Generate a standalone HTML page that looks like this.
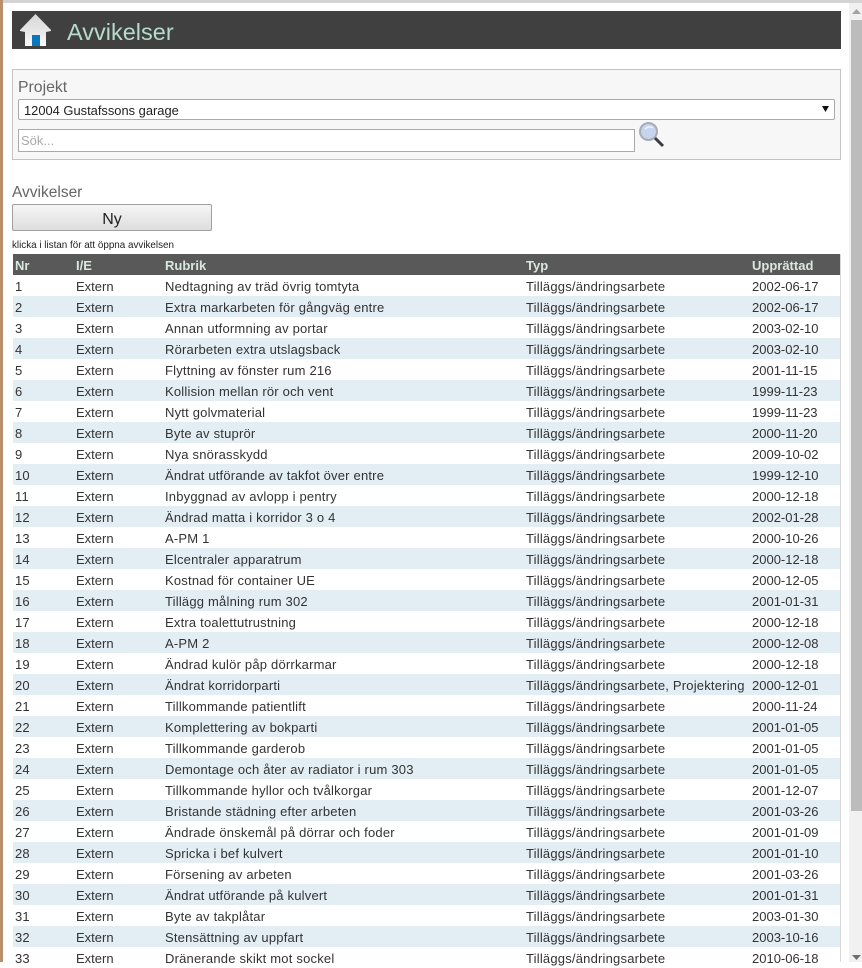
<!DOCTYPE html>
<html><head><meta charset="utf-8">
<style>
html,body{margin:0;padding:0;width:862px;height:962px;overflow:hidden;background:#fff;font-family:"Liberation Sans",sans-serif;color:#333}
div{position:absolute;white-space:nowrap;box-sizing:border-box}
.r{left:13px;width:828px;height:21px;font-size:13px;letter-spacing:.2px;line-height:21px;color:#333;overflow:hidden}
.r span{position:absolute;top:1px}
.b{background:#e3edf4}
.a{left:2px}.c{left:63px;letter-spacing:0}.d{left:152px}.e{left:513px}.f{left:739px;letter-spacing:0}
.h{background:#595959;color:#d9e8dc;font-weight:bold;letter-spacing:0}
</style></head><body>
<div style="left:0;top:0;width:862px;height:3px;background:#d4d4d4"></div>
<div style="left:0;top:0;width:3px;height:962px;background:#b98f6c"></div>
<div style="left:12px;top:11px;width:829px;height:38px;background:#404040"></div>
<svg style="position:absolute;left:19px;top:12px" width="34" height="36" viewBox="0 0 34 36">
<defs><linearGradient id="g" x1="0" y1="0" x2="0" y2="1"><stop offset="0" stop-color="#d8d8d8"/><stop offset=".45" stop-color="#e4e4e4"/><stop offset="1" stop-color="#fafafa"/></linearGradient></defs>
<path d="M16.500 2 L32 18 L32 19 L27 20 L27 34 L6 34 L6 20 L1 19 L1 18 Z" fill="url(#g)"/>
<rect x="13" y="23" width="8" height="11" fill="#0b76bd"/></svg>
<div style="left:67px;top:16px;font-size:23.500px;line-height:32px;color:#b5dccb">Avvikelser</div>
<div style="left:12px;top:69px;width:829px;height:91px;background:#f7f7f7;border:1px solid #c4c4c4"></div>
<div style="left:18px;top:78px;font-size:15.800px;line-height:20px;color:#666">Projekt</div>
<div style="left:18px;top:99px;width:817px;height:21px;background:#fff;border:1px solid #aaa;border-radius:2px;font-size:12.900px;line-height:21px;color:#222;padding-left:5px">12004 Gustafssons garage</div>
<svg style="position:absolute;left:821px;top:105px" width="9" height="8"><path d="M1 1H8L4.500 7Z" fill="#111"/></svg>
<div style="left:18px;top:129px;width:617px;height:23px;background:#fff;border:1px solid #aaa;font-size:13px;line-height:22px;color:#aaa;padding-left:2px">Sök...</div>
<svg style="position:absolute;left:638px;top:121px" width="27" height="27" viewBox="0 0 27 27">
<circle cx="10.500" cy="10.500" r="8.500" fill="#c6d4ee" stroke="#a8acb4" stroke-width="2"/>
<path d="M15 7a6 6 0 0 0-8 1" stroke="#eef2fa" stroke-width="1.500" fill="none"/>
<path d="M17 17L25 25" stroke="#3c3c3c" stroke-width="3"/></svg>
<div style="left:12px;top:183px;font-size:15.500px;line-height:20px;color:#666">Avvikelser</div>
<div style="left:12px;top:204px;width:200px;height:27px;background:linear-gradient(#f5f5f5,#dedede);border:1px solid #a0a0a0;border-radius:2px;text-align:center;font-size:16px;line-height:29px;color:#222;overflow:hidden">Ny</div>
<div style="left:12px;top:239px;font-size:9.850px;line-height:13px;color:#222">klicka i listan för att öppna avvikelsen</div>
<div class="r h" style="top:254px"><span class="a">Nr</span><span class="c">I/E</span><span class="d">Rubrik</span><span class="e">Typ</span><span class="f">Upprättad</span></div>
<div class="r" style="top:275px"><span class="a">1</span><span class="c">Extern</span><span class="d">Nedtagning av träd övrig tomtyta</span><span class="e">Tilläggs/ändringsarbete</span><span class="f">2002-06-17</span></div>
<div class="r b" style="top:296px"><span class="a">2</span><span class="c">Extern</span><span class="d">Extra markarbeten för gångväg entre</span><span class="e">Tilläggs/ändringsarbete</span><span class="f">2002-06-17</span></div>
<div class="r" style="top:317px"><span class="a">3</span><span class="c">Extern</span><span class="d">Annan utformning av portar</span><span class="e">Tilläggs/ändringsarbete</span><span class="f">2003-02-10</span></div>
<div class="r b" style="top:338px"><span class="a">4</span><span class="c">Extern</span><span class="d">Rörarbeten extra utslagsback</span><span class="e">Tilläggs/ändringsarbete</span><span class="f">2003-02-10</span></div>
<div class="r" style="top:359px"><span class="a">5</span><span class="c">Extern</span><span class="d">Flyttning av fönster rum 216</span><span class="e">Tilläggs/ändringsarbete</span><span class="f">2001-11-15</span></div>
<div class="r b" style="top:380px"><span class="a">6</span><span class="c">Extern</span><span class="d">Kollision mellan rör och vent</span><span class="e">Tilläggs/ändringsarbete</span><span class="f">1999-11-23</span></div>
<div class="r" style="top:401px"><span class="a">7</span><span class="c">Extern</span><span class="d">Nytt golvmaterial</span><span class="e">Tilläggs/ändringsarbete</span><span class="f">1999-11-23</span></div>
<div class="r b" style="top:422px"><span class="a">8</span><span class="c">Extern</span><span class="d">Byte av stuprör</span><span class="e">Tilläggs/ändringsarbete</span><span class="f">2000-11-20</span></div>
<div class="r" style="top:443px"><span class="a">9</span><span class="c">Extern</span><span class="d">Nya snörasskydd</span><span class="e">Tilläggs/ändringsarbete</span><span class="f">2009-10-02</span></div>
<div class="r b" style="top:464px"><span class="a">10</span><span class="c">Extern</span><span class="d">Ändrat utförande av takfot över entre</span><span class="e">Tilläggs/ändringsarbete</span><span class="f">1999-12-10</span></div>
<div class="r" style="top:485px"><span class="a">11</span><span class="c">Extern</span><span class="d">Inbyggnad av avlopp i pentry</span><span class="e">Tilläggs/ändringsarbete</span><span class="f">2000-12-18</span></div>
<div class="r b" style="top:506px"><span class="a">12</span><span class="c">Extern</span><span class="d">Ändrad matta i korridor 3 o 4</span><span class="e">Tilläggs/ändringsarbete</span><span class="f">2002-01-28</span></div>
<div class="r" style="top:527px"><span class="a">13</span><span class="c">Extern</span><span class="d">A-PM 1</span><span class="e">Tilläggs/ändringsarbete</span><span class="f">2000-10-26</span></div>
<div class="r b" style="top:548px"><span class="a">14</span><span class="c">Extern</span><span class="d">Elcentraler apparatrum</span><span class="e">Tilläggs/ändringsarbete</span><span class="f">2000-12-18</span></div>
<div class="r" style="top:569px"><span class="a">15</span><span class="c">Extern</span><span class="d">Kostnad för container UE</span><span class="e">Tilläggs/ändringsarbete</span><span class="f">2000-12-05</span></div>
<div class="r b" style="top:590px"><span class="a">16</span><span class="c">Extern</span><span class="d">Tillägg målning rum 302</span><span class="e">Tilläggs/ändringsarbete</span><span class="f">2001-01-31</span></div>
<div class="r" style="top:611px"><span class="a">17</span><span class="c">Extern</span><span class="d">Extra toalettutrustning</span><span class="e">Tilläggs/ändringsarbete</span><span class="f">2000-12-18</span></div>
<div class="r b" style="top:632px"><span class="a">18</span><span class="c">Extern</span><span class="d">A-PM 2</span><span class="e">Tilläggs/ändringsarbete</span><span class="f">2000-12-08</span></div>
<div class="r" style="top:653px"><span class="a">19</span><span class="c">Extern</span><span class="d">Ändrad kulör påp dörrkarmar</span><span class="e">Tilläggs/ändringsarbete</span><span class="f">2000-12-18</span></div>
<div class="r b" style="top:674px"><span class="a">20</span><span class="c">Extern</span><span class="d">Ändrat korridorparti</span><span class="e">Tilläggs/ändringsarbete, Projektering</span><span class="f">2000-12-01</span></div>
<div class="r" style="top:695px"><span class="a">21</span><span class="c">Extern</span><span class="d">Tillkommande patientlift</span><span class="e">Tilläggs/ändringsarbete</span><span class="f">2000-11-24</span></div>
<div class="r b" style="top:716px"><span class="a">22</span><span class="c">Extern</span><span class="d">Komplettering av bokparti</span><span class="e">Tilläggs/ändringsarbete</span><span class="f">2001-01-05</span></div>
<div class="r" style="top:737px"><span class="a">23</span><span class="c">Extern</span><span class="d">Tillkommande garderob</span><span class="e">Tilläggs/ändringsarbete</span><span class="f">2001-01-05</span></div>
<div class="r b" style="top:758px"><span class="a">24</span><span class="c">Extern</span><span class="d">Demontage och åter av radiator i rum 303</span><span class="e">Tilläggs/ändringsarbete</span><span class="f">2001-01-05</span></div>
<div class="r" style="top:779px"><span class="a">25</span><span class="c">Extern</span><span class="d">Tillkommande hyllor och tvålkorgar</span><span class="e">Tilläggs/ändringsarbete</span><span class="f">2001-12-07</span></div>
<div class="r b" style="top:800px"><span class="a">26</span><span class="c">Extern</span><span class="d">Bristande städning efter arbeten</span><span class="e">Tilläggs/ändringsarbete</span><span class="f">2001-03-26</span></div>
<div class="r" style="top:821px"><span class="a">27</span><span class="c">Extern</span><span class="d">Ändrade önskemål på dörrar och foder</span><span class="e">Tilläggs/ändringsarbete</span><span class="f">2001-01-09</span></div>
<div class="r b" style="top:842px"><span class="a">28</span><span class="c">Extern</span><span class="d">Spricka i bef kulvert</span><span class="e">Tilläggs/ändringsarbete</span><span class="f">2001-01-10</span></div>
<div class="r" style="top:863px"><span class="a">29</span><span class="c">Extern</span><span class="d">Försening av arbeten</span><span class="e">Tilläggs/ändringsarbete</span><span class="f">2001-03-26</span></div>
<div class="r b" style="top:884px"><span class="a">30</span><span class="c">Extern</span><span class="d">Ändrat utförande på kulvert</span><span class="e">Tilläggs/ändringsarbete</span><span class="f">2001-01-31</span></div>
<div class="r" style="top:905px"><span class="a">31</span><span class="c">Extern</span><span class="d">Byte av takplåtar</span><span class="e">Tilläggs/ändringsarbete</span><span class="f">2003-01-30</span></div>
<div class="r b" style="top:926px"><span class="a">32</span><span class="c">Extern</span><span class="d">Stensättning av uppfart</span><span class="e">Tilläggs/ändringsarbete</span><span class="f">2003-10-16</span></div>
<div class="r" style="top:947px"><span class="a">33</span><span class="c">Extern</span><span class="d">Dränerande skikt mot sockel</span><span class="e">Tilläggs/ändringsarbete</span><span class="f">2010-06-18</span></div>
<div style="left:840px;top:254px;width:1px;height:708px;background:#d8d8d8"></div>
<div style="left:849px;top:3px;width:13px;height:959px;background:#f1f1f1"></div>
<div style="left:851px;top:20px;width:11px;height:791px;background:#bcbcbc"></div>
<svg style="position:absolute;left:852px;top:9px" width="9" height="6"><path d="M0 5H9L4.500 0Z" fill="#a3a3a3"/></svg>
<svg style="position:absolute;left:852px;top:955px" width="9" height="6"><path d="M0 0H9L4.500 5Z" fill="#6e6e6e"/></svg>
</body></html>
